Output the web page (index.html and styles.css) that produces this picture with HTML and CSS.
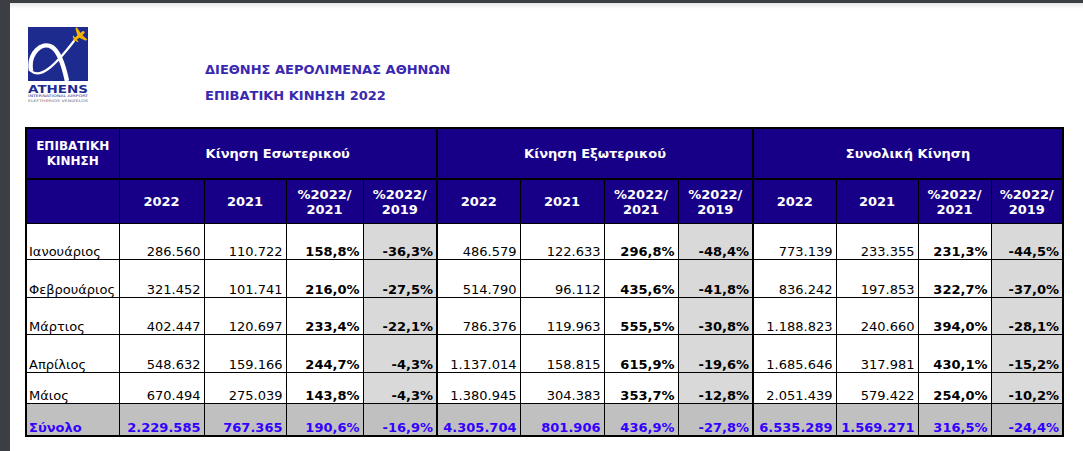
FILE: index.html
```html
<!DOCTYPE html>
<html lang="el">
<head>
<meta charset="utf-8">
<title>Επιβατική Κίνηση 2022</title>
<link rel="stylesheet" href="styles.css">
</head>
<body>
<div class="page">
  <div class="top">
    <svg class="logo" width="60" height="76" viewBox="0 0 60 76">
      <rect x="0" y="0" width="60" height="54" fill="#1d2b8f"/>
      <path d="M3 44 C 0 26, 14 14, 24 20 C 32 25, 36 40, 39 54" fill="none" stroke="#fff" stroke-width="4.5" stroke-linecap="butt"/>
      <path d="M3 44 C 12 52, 26 40, 46 14" fill="none" stroke="#fff" stroke-width="2.2" stroke-linecap="round"/>
      <g transform="translate(51 9) rotate(-40)" fill="#f4b400">
        <rect x="-7" y="-1.4" width="14" height="2.8" rx="1.4"/>
        <path d="M-1 -1 L 2 -8 L 4 -8 L 3 -1 Z"/>
        <path d="M-1 1 L 2 8 L 4 8 L 3 1 Z"/>
        <path d="M-6 -1 L -5 -4 L -4 -4 L -4 -1 Z"/>
        <path d="M-6 1 L -5 4 L -4 4 L -4 1 Z"/>
      </g>
      <text x="0" y="66" class="lg-athens" textLength="60" lengthAdjust="spacingAndGlyphs">ATHENS</text>
      <text x="0" y="70" class="lg-intl" textLength="60" lengthAdjust="spacingAndGlyphs">INTERNATIONAL AIRPORT</text>
      <text x="0" y="74.5" class="lg-elef" textLength="60" lengthAdjust="spacingAndGlyphs">ELEFTHERIOS VENIZELOS</text>
    </svg>
    <div class="titles">
      <div class="title">ΔΙΕΘΝΗΣ ΑΕΡΟΛΙΜΕΝΑΣ ΑΘΗΝΩΝ</div>
      <div class="title">ΕΠΙΒΑΤΙΚΗ ΚΙΝΗΣΗ 2022</div>
    </div>
  </div>

  <table class="traffic">
    <colgroup>
      <col class="c-label">
      <col class="c-a"><col class="c-b"><col class="c-c"><col class="c-d">
      <col class="c-e"><col class="c-f"><col class="c-g"><col class="c-h">
      <col class="c-i"><col class="c-j"><col class="c-k"><col class="c-l">
    </colgroup>
    <thead>
      <tr class="h1">
        <th class="corner">ΕΠΙΒΑΤΙΚΗ<br>ΚΙΝΗΣΗ</th>
        <th colspan="4">Κίνηση Εσωτερικού</th>
        <th colspan="4" class="sep">Κίνηση Εξωτερικού</th>
        <th colspan="4" class="sep">Συνολική Κίνηση</th>
      </tr>
      <tr class="h2">
        <th></th>
        <th>2022</th><th>2021</th><th>%2022/<br>2021</th><th>%2022/<br>2019</th>
        <th class="sep">2022</th><th>2021</th><th>%2022/<br>2021</th><th>%2022/<br>2019</th>
        <th class="sep">2022</th><th>2021</th><th>%2022/<br>2021</th><th>%2022/<br>2019</th>
      </tr>
    </thead>
    <tbody>
      <tr class="r-jan">
        <td class="lbl">Ιανουάριος</td>
        <td>286.560</td><td>110.722</td><td class="pc">158,8%</td><td class="pc g">-36,3%</td>
        <td class="sep">486.579</td><td>122.633</td><td class="pc">296,8%</td><td class="pc g">-48,4%</td>
        <td class="sep">773.139</td><td>233.355</td><td class="pc">231,3%</td><td class="pc g">-44,5%</td>
      </tr>
      <tr class="r-feb">
        <td class="lbl">Φεβρουάριος</td>
        <td>321.452</td><td>101.741</td><td class="pc">216,0%</td><td class="pc g">-27,5%</td>
        <td class="sep">514.790</td><td>96.112</td><td class="pc">435,6%</td><td class="pc g">-41,8%</td>
        <td class="sep">836.242</td><td>197.853</td><td class="pc">322,7%</td><td class="pc g">-37,0%</td>
      </tr>
      <tr class="r-mar">
        <td class="lbl">Μάρτιος</td>
        <td>402.447</td><td>120.697</td><td class="pc">233,4%</td><td class="pc g">-22,1%</td>
        <td class="sep">786.376</td><td>119.963</td><td class="pc">555,5%</td><td class="pc g">-30,8%</td>
        <td class="sep">1.188.823</td><td>240.660</td><td class="pc">394,0%</td><td class="pc g">-28,1%</td>
      </tr>
      <tr class="r-apr">
        <td class="lbl">Απρίλιος</td>
        <td>548.632</td><td>159.166</td><td class="pc">244,7%</td><td class="pc g">-4,3%</td>
        <td class="sep">1.137.014</td><td>158.815</td><td class="pc">615,9%</td><td class="pc g">-19,6%</td>
        <td class="sep">1.685.646</td><td>317.981</td><td class="pc">430,1%</td><td class="pc g">-15,2%</td>
      </tr>
      <tr class="r-may">
        <td class="lbl">Μάιος</td>
        <td>670.494</td><td>275.039</td><td class="pc">143,8%</td><td class="pc g">-4,3%</td>
        <td class="sep">1.380.945</td><td>304.383</td><td class="pc">353,7%</td><td class="pc g">-12,8%</td>
        <td class="sep">2.051.439</td><td>579.422</td><td class="pc">254,0%</td><td class="pc g">-10,2%</td>
      </tr>
      <tr class="total">
        <td class="lbl">Σύνολο</td>
        <td>2.229.585</td><td>767.365</td><td>190,6%</td><td>-16,9%</td>
        <td class="sep">4.305.704</td><td>801.906</td><td>436,9%</td><td>-27,8%</td>
        <td class="sep">6.535.289</td><td>1.569.271</td><td>316,5%</td><td>-24,4%</td>
      </tr>
    </tbody>
  </table>
</div>
</body>
</html>
```

FILE: styles.css
```css
html, body {
  margin: 0;
  padding: 0;
  background: #ffffff;
}

.page {
  box-sizing: border-box;
  width: 1083px;
  height: 451px;
  border-top: 3px solid #3b3e43;
  border-left: 10px solid #3b3e43;
  padding: 24px 0 0 15px;
  background: linear-gradient(#e6e6e6 0, #ffffff 6px);
  font-family: "DejaVu Sans", Verdana, sans-serif;
  overflow: hidden;
}

.top {
  display: flex;
  height: 100px;
}

.logo {
  display: block;
  margin-left: 3px;
}

.lg-athens {
  font-family: "DejaVu Sans", sans-serif;
  font-weight: bold;
  font-size: 11px;
  fill: #1d2b8f;
}

.lg-intl {
  font-family: "DejaVu Sans", sans-serif;
  font-size: 3.5px;
  fill: #1d2b8f;
}

.lg-elef {
  font-family: "DejaVu Sans", sans-serif;
  font-size: 3.5px;
  fill: #6a6a7a;
}

.titles {
  margin-left: 117px;
  padding-top: 30px;
}

.title {
  font-weight: bold;
  font-size: 13px;
  line-height: 26px;
  color: #3a28b0;
}

.traffic {
  border-collapse: collapse;
  table-layout: fixed;
  width: 1037px;
  border: 2px solid #000;
  font-size: 13px;
}

.c-label { width: 93px; }
.c-a { width: 85px; }
.c-b { width: 82px; }
.c-c { width: 77px; }
.c-d { width: 74px; }
.c-e { width: 83px; }
.c-f { width: 84px; }
.c-g { width: 74px; }
.c-h { width: 75px; }
.c-i { width: 83px; }
.c-j { width: 82px; }
.c-k { width: 73px; }
.c-l { width: 72px; }

.traffic th {
  background: #170087;
  color: #ffffff;
  font-weight: bold;
  font-size: 13px;
  line-height: 15px;
  text-align: center;
  vertical-align: middle;
  border: 1px solid #000;
  padding: 0;
}

.traffic th.corner {
  font-size: 12px;
}

.h1 th { height: 49px; border-bottom-width: 2px; }
.h2 th { height: 43px; }

.traffic td {
  border: 1px solid #000;
  padding: 0 3px 0 2px;
  text-align: right;
  vertical-align: bottom;
  color: #000;
  line-height: 15px;
  white-space: nowrap;
  overflow: hidden;
}

.traffic .sep { border-left-width: 2px; }

.traffic td.lbl { text-align: left; }
.traffic td.pc { font-weight: bold; }
.traffic td.g { background: #d9d9d9; }

.r-jan td { height: 35px; }
.r-feb td { height: 37px; }
.r-mar td { height: 36px; }
.r-apr td { height: 37px; }
.r-may td { height: 30px; }

.total td {
  height: 31px;
  background: #c0c0c0;
  color: #3300ff;
  font-weight: bold;
}
```
